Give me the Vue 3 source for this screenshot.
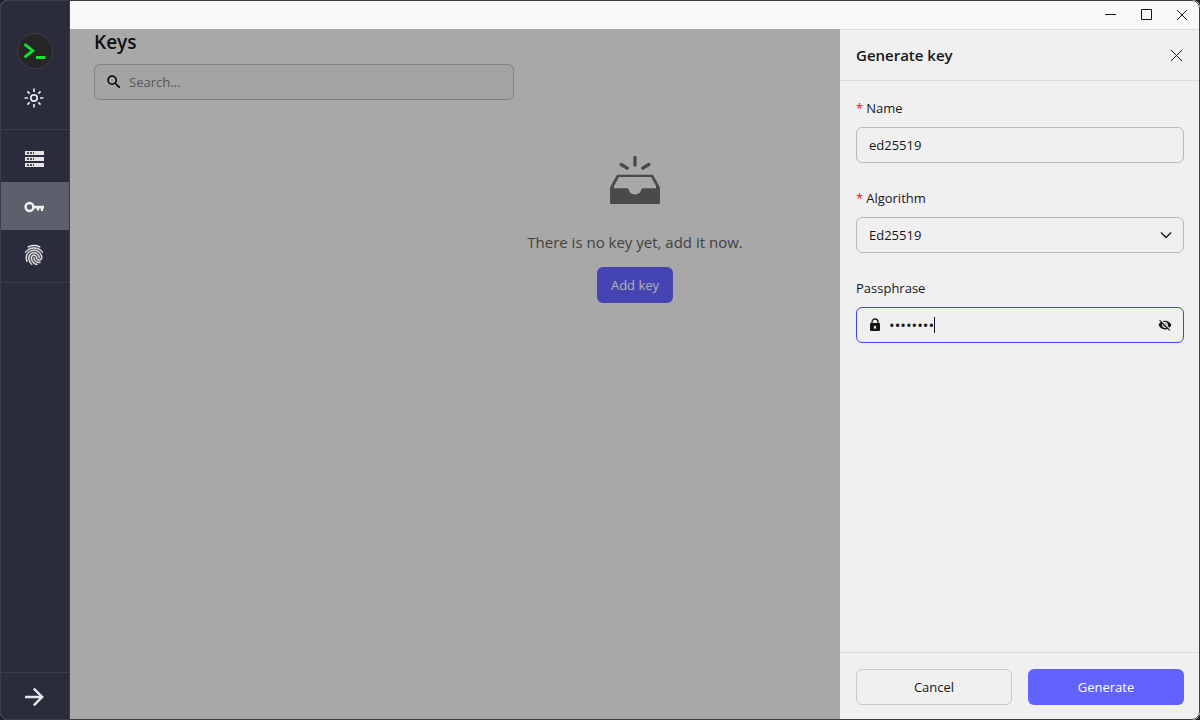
<script setup>
import { ref } from 'vue'

const search = ref('')
const name = ref('ed25519')
const algorithm = ref('Ed25519')
const passphrase = ref('password')
</script>

<template>
  <div class="window">
    <nav class="sidebar" aria-label="Main">
      <div class="group brand">
        <svg class="logo" viewBox="0 0 36 36" aria-hidden="true">
          <circle cx="18" cy="18" r="17.5" fill="#262627" stroke="#3e3e4c" />
          <path d="M7.5 11.2L15.8 17.7L7.500 24.400" fill="none" stroke="#0ee52d" stroke-width="2.8" />
          <path d="M19 23h9.500v3H19z" fill="#0ee52d" />
        </svg>
        <button class="item" aria-label="Toggle theme">
          <svg class="icon" viewBox="0 0 20 20" fill="none" stroke="#e8e8ea" stroke-width="1.7">
            <circle cx="10" cy="10" r="3.200" />
            <path d="M10 .5v3.500M10 16v3.500M.5 10H4M16 10h3.500M3.400 3.400l2.300 2.300M14.300 14.300l2.300 2.300M3.400 16.600l2.300-2.300M14.300 5.700l2.300-2.300" />
          </svg>
        </button>
      </div>
      <div class="group">
        <button class="item" aria-label="Servers">
          <svg class="icon" viewBox="0 0 20 20">
            <path d="M1 2h19v4H1zM1 8h19v4H1zM1 14h19v4H1z" fill="#e4e4e5" />
            <path d="M3 3h2v2H3zM6 3h2v2H6zM9 3h1v2H9zM3 9h2v2H3zM6 9h2v2H6zM9 9h1v2H9zM3 15h2v2H3zM6 15h2v2H6zM9 15h1v2H9z" fill="#4a4b58" />
          </svg>
        </button>
        <button class="item active" aria-label="Keys" aria-current="page">
          <svg class="icon" viewBox="0 0 20 20" fill="none" stroke="#eeeeef">
            <circle cx="5.500" cy="10" r="3.900" stroke-width="2.500" />
            <path d="M9.500 10.200H20" stroke-width="2.800" />
            <path d="M14 10v3.500M18 10v4" stroke-width="2.300" />
          </svg>
        </button>
        <button class="item" aria-label="Known hosts">
          <svg class="icon print" viewBox="0 0 24 24" fill="#e8e8ea" stroke="#e8e8ea" stroke-width=".5">
            <path d="M17.81,4.47C17.73,4.47 17.65,4.45 17.58,4.41C15.66,3.42 14,3 12,3C10.03,3 8.15,3.47 6.44,4.41C6.2,4.54 5.9,4.45 5.76,4.21C5.63,3.97 5.72,3.66 5.96,3.53C7.82,2.5 9.86,2 12,2C14.14,2 16,2.47 18.04,3.5C18.29,3.65 18.38,3.95 18.25,4.19C18.16,4.37 18,4.47 17.81,4.47M3.5,9.72C3.4,9.72 3.3,9.69 3.21,9.63C3,9.47 2.93,9.16 3.09,8.93C4.08,7.53 5.34,6.43 6.84,5.66C10,4.04 14,4.03 17.15,5.65C18.65,6.42 19.91,7.5 20.9,8.9C21.06,9.12 21,9.44 20.78,9.6C20.55,9.76 20.24,9.71 20.08,9.5C19.18,8.22 18.04,7.23 16.69,6.54C13.82,5.07 10.15,5.07 7.29,6.55C5.93,7.25 4.79,8.25 3.89,9.5C3.81,9.65 3.66,9.72 3.5,9.72M9.75,21.79C9.62,21.79 9.5,21.74 9.4,21.64C8.53,20.77 8.06,20.21 7.39,19C6.7,17.77 6.34,16.27 6.34,14.66C6.34,11.69 8.88,9.27 12,9.27C15.12,9.27 17.66,11.69 17.66,14.66A0.5,0.5 0 0,1 17.16,15.16A0.5,0.5 0 0,1 16.66,14.66C16.66,12.24 14.57,10.27 12,10.27C9.43,10.27 7.34,12.24 7.34,14.66C7.34,16.1 7.66,17.43 8.27,18.5C8.91,19.66 9.35,20.15 10.12,20.93C10.31,21.13 10.31,21.44 10.12,21.64C10,21.74 9.88,21.79 9.75,21.79M16.92,19.94C15.73,19.94 14.68,19.64 13.82,19.05C12.33,18.04 11.44,16.4 11.44,14.66A0.5,0.5 0 0,1 11.94,14.16A0.5,0.5 0 0,1 12.44,14.66C12.44,16.07 13.16,17.4 14.38,18.22C15.09,18.7 15.92,18.93 16.92,18.93C17.16,18.93 17.56,18.9 17.96,18.83C18.23,18.78 18.5,18.96 18.54,19.24C18.59,19.5 18.41,19.77 18.13,19.82C17.56,19.93 17.06,19.94 16.92,19.94M14.91,22C14.87,22 14.82,22 14.78,22C13.19,21.54 12.15,20.95 11.06,19.88C9.66,18.5 8.89,16.64 8.89,14.66C8.89,13.04 10.27,11.72 11.97,11.72C13.67,11.72 15.05,13.04 15.05,14.66C15.05,15.73 16,16.6 17.13,16.6C18.28,16.6 19.21,15.73 19.21,14.66C19.21,10.89 15.96,7.83 11.96,7.83C9.12,7.83 6.5,9.41 5.35,11.86C4.96,12.67 4.76,13.62 4.76,14.66C4.76,15.44 4.83,16.67 5.43,18.27C5.53,18.53 5.4,18.82 5.14,18.91C4.88,19 4.59,18.87 4.5,18.62C4,17.31 3.77,16 3.77,14.66C3.77,13.46 4,12.37 4.45,11.42C5.78,8.63 8.73,6.82 11.96,6.82C16.5,6.82 20.21,10.33 20.21,14.65C20.21,16.27 18.83,17.59 17.13,17.59C15.43,17.59 14.05,16.27 14.05,14.65C14.05,13.58 13.12,12.71 11.97,12.71C10.82,12.71 9.89,13.58 9.89,14.65C9.89,16.36 10.55,17.96 11.76,19.16C12.71,20.1 13.62,20.62 15.03,21C15.3,21.08 15.45,21.36 15.38,21.62C15.33,21.85 15.12,22 14.91,22Z" />
          </svg>
        </button>
      </div>
      <div class="group bottom">
        <button class="item" aria-label="Expand sidebar">
          <svg class="icon" viewBox="0 0 20 20" fill="none" stroke="#e8e8ea" stroke-width="2.400">
            <path d="M1 10h17.500M9.800 1.600L18.200 10L9.800 18.400" />
          </svg>
        </button>
      </div>
    </nav>

    <div class="workspace">
      <header class="titlebar">
        <button aria-label="Minimize">
          <svg viewBox="0 0 12 12"><path d="M1 6.500h11" /></svg>
        </button>
        <button aria-label="Maximize">
          <svg viewBox="0 0 12 12"><path d="M1.500 1.500h10v10h-10z" /></svg>
        </button>
        <button aria-label="Close window">
          <svg viewBox="0 0 12 12"><path d="M1 2l10 10M11 2L1 12" /></svg>
        </button>
      </header>

      <div class="stage">
        <main class="page">
          <h1>Keys</h1>
          <div class="box search">
            <svg viewBox="0 0 24 24"><path d="M15.500 14h-.79l-.28-.27A6.471 6.471 0 0 0 16 9.500 6.500 6.500 0 1 0 9.500 16c1.610 0 3.090-.59 4.230-1.570l.27.28v.79l5 4.990L20.490 19l-4.990-5zm-6 0C7.010 14 5 11.990 5 9.500S7.010 5 9.500 5 14 7.010 14 9.500 11.990 14 9.500 14z" /></svg>
            <input v-model="search" type="text" placeholder="Search..." aria-label="Search keys" />
          </div>
          <section class="empty">
            <svg viewBox="0 0 50 48" aria-hidden="true">
              <path d="M25 1.500v7.500M11.200 8.500l6 3.600M38.800 8.500l-6 3.600" fill="none" stroke="#6b6b6b" stroke-width="3.400" stroke-linecap="round" />
              <path fill-rule="evenodd" d="M8 18.800h34q1.200 0 1.700 1.100l5.700 10.300q.6 1 .6 2.200v14.100q0 1.500-1.500 1.500h-47q-1.500 0-1.500-1.500V32.400q0-1.200.6-2.200l5.700-10.300q.5-1.100 1.700-1.100zM9 21l-5 8.900v2.300h12.800q1.500 0 1.900 1.400a6.500 6.500 0 0 0 12.600 0q.4-1.400 1.900-1.400H46v-2.300L41 21z" fill="#6b6b6b" />
            </svg>
            <p>There is no key yet, add it now.</p>
            <button class="btn primary">Add key</button>
          </section>
        </main>
        <div class="mask"></div>

        <aside class="drawer" role="dialog" aria-labelledby="drawer-title">
          <header class="drawer-head">
            <h2 id="drawer-title">Generate key</h2>
            <button aria-label="Close">
              <svg viewBox="0 0 12 12"><path d="M1 1l11 11M12 1L1 12" /></svg>
            </button>
          </header>
          <form id="key-form" class="drawer-body" @submit.prevent>
            <div class="field">
              <label for="key-name"><span class="required">*</span>Name</label>
              <div class="box"><input id="key-name" v-model="name" type="text" /></div>
            </div>
            <div class="field">
              <label for="key-algorithm"><span class="required">*</span>Algorithm</label>
              <div class="box">
                <select id="key-algorithm" v-model="algorithm">
                  <option>Ed25519</option>
                  <option>RSA</option>
                  <option>ECDSA</option>
                </select>
                <svg class="chevron" viewBox="0 0 12 12"><path d="M1 3.500L6 8.500L11 3.500" /></svg>
              </div>
            </div>
            <div class="field">
              <label for="key-passphrase">Passphrase</label>
              <div class="box focused">
                <svg class="lock" viewBox="0 0 12 14">
                  <path d="M3 5.500V4a3 3 0 0 1 6 0v1.500" fill="none" stroke="#17171b" stroke-width="1.300" />
                  <path fill-rule="evenodd" d="M2 5h8q1 0 1 1v6q0 1-1 1H2q-1 0-1-1V6q0-1 1-1zM6 7.700a1.300 1.300 0 0 0-.6 2.400V11h1.200v-.9A1.300 1.300 0 0 0 6 7.700z" fill="#17171b" />
                </svg>
                <div class="secret">
                  <input id="key-passphrase" v-model="passphrase" type="password" />
                  <span class="caret"></span>
                </div>
                <button type="button" class="reveal" aria-label="Show passphrase">
                  <svg viewBox="0 0 24 24"><path d="M12 7c2.760 0 5 2.240 5 5 0 .65-.13 1.260-.36 1.830l2.920 2.920c1.510-1.260 2.700-2.890 3.430-4.750-1.730-4.390-6-7.500-11-7.500-1.400 0-2.740.25-3.980.7l2.160 2.160C10.740 7.130 11.350 7 12 7zM2 4.270l2.280 2.280.46.46C3.080 8.300 1.780 10.020 1 12c1.730 4.390 6 7.500 11 7.500 1.550 0 3.030-.3 4.380-.84l.42.42L19.730 22 21 20.730 3.270 3 2 4.270zM7.530 9.800l1.550 1.550c-.05.21-.08.43-.08.65 0 1.660 1.340 3 3 3 .22 0 .44-.03.65-.08l1.550 1.550c-.67.33-1.410.53-2.200.53-2.760 0-5-2.240-5-5 0-.79.2-1.530.53-2.200zm4.310-.78l3.150 3.150.02-.16c0-1.660-1.340-3-3-3l-.17.01z" fill="#17171b" /></svg>
                </button>
              </div>
            </div>
          </form>
          <footer class="drawer-foot">
            <button type="button" class="btn plain">Cancel</button>
            <button type="submit" form="key-form" class="btn primary">Generate</button>
          </footer>
        </aside>
      </div>
    </div>
  </div>
</template>

<style>
body {
  background: #1c1d22;
}
</style>

<style scoped>
.window,
.window * {
  box-sizing: border-box;
}

.window {
  position: relative;
  display: flex;
  height: 100vh;
  overflow: hidden;
  border-radius: 8px;
  background: #f1f1f1;
  color: #17171b;
  font-family: "Open Sans", "Noto Sans", sans-serif;
  font-size: 13px;
  line-height: 22px;
}

.window::after {
  content: "";
  position: absolute;
  inset: 0;
  border: 1px solid #3c3c42;
  border-radius: 8px;
  pointer-events: none;
}

button,
input,
select {
  margin: 0;
  padding: 0;
  border: 0;
  outline: 0;
  background: none;
  color: inherit;
  font: inherit;
}

button {
  cursor: pointer;
}

svg {
  display: block;
  flex: none;
}

.sidebar {
  display: flex;
  flex: none;
  flex-direction: column;
  width: 70px;
  border-right: 1px solid #3c3d4b;
  background: #2b2c3b;
}

.group {
  padding: 4px 0;
  border-bottom: 1px solid #3c3d4b;
}

.brand {
  display: flex;
  flex-direction: column;
  align-items: center;
  gap: 4px;
  padding-top: 33px;
  padding-bottom: 8px;
}

.logo {
  width: 36px;
  height: 36px;
}

.item {
  display: flex;
  align-items: center;
  justify-content: center;
  width: 100%;
  height: 48px;
  padding: 2px 1px 0 0;
}

.active {
  background: #5e5f6d;
}

.icon {
  width: 20px;
  height: 20px;
}

.print {
  width: 24px;
  height: 24px;
}

.bottom {
  margin-top: auto;
  padding: 0;
  border-top: 1px solid #3c3d4b;
  border-bottom: 0;
}

.bottom .item {
  height: 47px;
  padding-top: 0;
}

.workspace {
  display: flex;
  flex: 1;
  flex-direction: column;
  min-width: 0;
}

.titlebar {
  display: flex;
  justify-content: flex-end;
  height: 29px;
  padding-bottom: 1px;
  background: #f9f9f9;
}

.titlebar button {
  display: flex;
  align-items: center;
  justify-content: center;
  width: 36px;
}

.titlebar svg,
.drawer-head svg,
.chevron {
  width: 12px;
  height: 12px;
  fill: none;
  stroke: #17171b;
  stroke-width: 1;
}

.box .chevron {
  stroke-width: 1.4;
}

.stage {
  position: relative;
  flex: 1;
  min-height: 0;
}

.page {
  height: 100%;
  padding: 0 24px;
}

h1,
h2,
p {
  margin: 0;
}

h1 {
  padding-bottom: 9px;
  font-size: 19px;
  font-weight: 600;
  line-height: 26px;
}

.box {
  position: relative;
  display: flex;
  align-items: center;
  gap: 8px;
  height: 36px;
  padding: 0 11px 0 12px;
  border: 1px solid #b9b9bb;
  border-radius: 6px;
}

.box input,
.box select {
  flex: 1;
  width: 100%;
  min-width: 0;
  height: 100%;
}

.box select {
  appearance: none;
}

.search {
  width: 420px;
  max-width: 100%;
  padding: 0 10px;
  gap: 6px;
  background: #ebebeb;
}

.search svg {
  width: 18px;
  height: 18px;
}

.search input::placeholder {
  color: #7d7d7f;
  opacity: 1;
}

.empty {
  display: flex;
  flex-direction: column;
  align-items: center;
  padding-top: 56px;
  color: #5f5f62;
}

.empty > svg {
  width: 50px;
  height: 48px;
}

.empty p {
  padding: 26px 0 13px;
  font-size: 15px;
  line-height: 24px;
}

.btn {
  height: 36px;
  padding: 0 13px;
  border: 1px solid transparent;
  border-radius: 6px;
}

.primary {
  background: #6262ff;
  color: #fff;
}

.plain {
  border-color: #c8c8c9;
}

.mask {
  position: absolute;
  inset: 0;
  background: rgba(0, 0, 0, 0.3);
}

.drawer {
  position: absolute;
  top: 0;
  right: 0;
  bottom: 0;
  display: flex;
  flex-direction: column;
  width: 360px;
  max-width: 100%;
  border-top: 1px solid #dcdcdc;
  background: #f0f0f0;
}

.drawer-head {
  display: flex;
  align-items: center;
  justify-content: space-between;
  height: 51px;
  padding: 0 2px 0 16px;
  border-bottom: 1px solid #dcdcdc;
}

.drawer-head button {
  display: flex;
  padding: 16px;
}

h2 {
  font-size: 15px;
  font-weight: 600;
}

.drawer-body {
  display: flex;
  flex: 1;
  flex-direction: column;
  gap: 24px;
  padding: 16px;
}

.field {
  display: flex;
  flex-direction: column;
  gap: 8px;
}

.field label {
  display: flex;
  gap: 3px;
}

.required {
  color: #f00a1f;
}

.focused {
  border-color: #4242f0;
}

.lock {
  width: 12px;
  height: 14px;
}

.secret {
  position: relative;
  flex: 1;
  height: 100%;
}

.secret input {
  display: block;
  font-size: 15px;
  caret-color: transparent;
}

.caret {
  position: absolute;
  top: 9px;
  left: 45px;
  width: 1px;
  height: 16px;
  background: #17171b;
}

.reveal svg {
  width: 14px;
  height: 14px;
}

.drawer-foot {
  display: grid;
  grid-template-columns: 1fr 1fr;
  gap: 16px;
  padding: 16px 16px 15px;
  border-top: 1px solid #dcdcdc;
}
</style>
